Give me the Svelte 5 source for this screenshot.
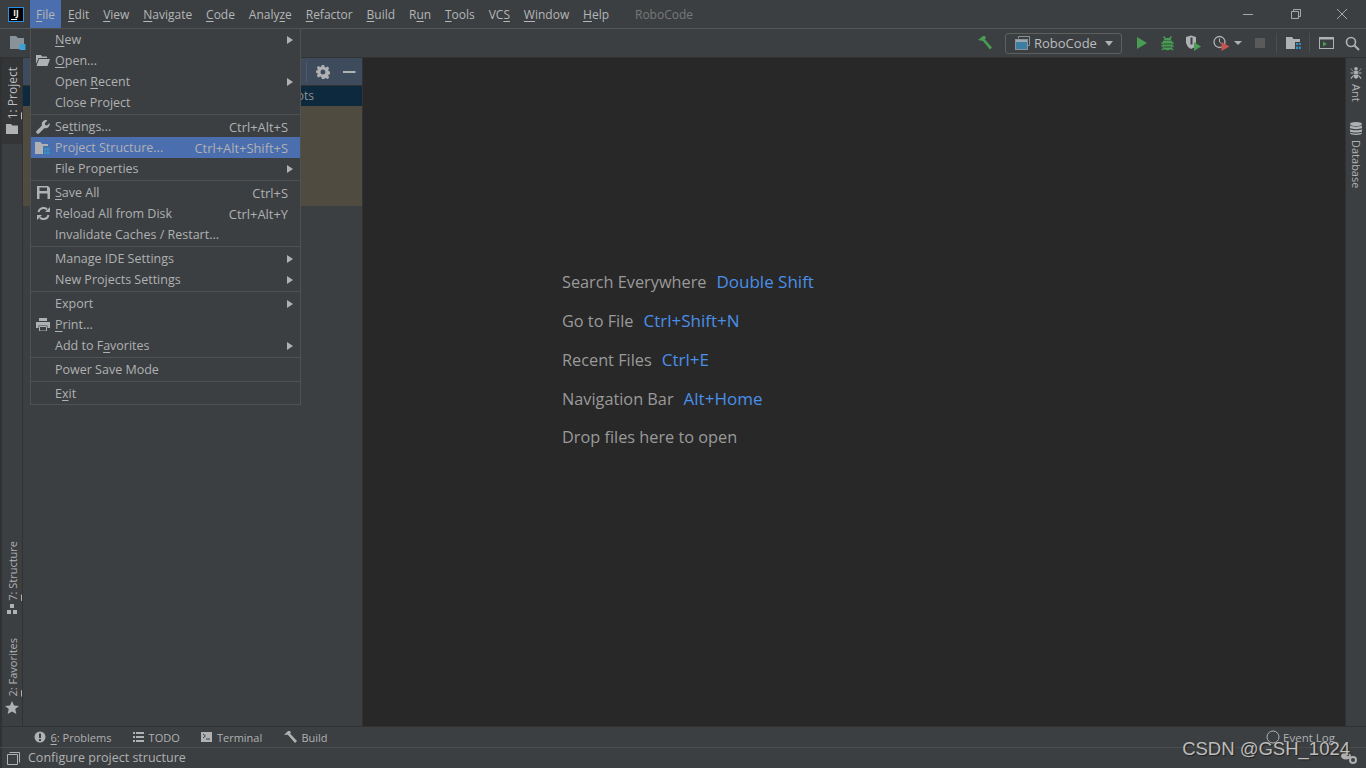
<script>
  const menuBar = [
    ["F", "ile"], ["E", "dit"], ["V", "iew"], ["N", "avigate"], ["C", "ode"],
    ["", "Analy", "z", "e"], ["R", "efactor"], ["B", "uild"], ["", "R", "u", "n"],
    ["T", "ools"], ["", "VC", "S", ""], ["W", "indow"], ["H", "elp"]
  ];

  // pre, underlined letter, post
  const groups = [
    [
      { t: ["", "N", "ew"], sub: true },
      { t: ["", "O", "pen..."], icon: "open" },
      { t: ["Open ", "R", "ecent"], sub: true },
      { t: ["Close Project", "", ""] }
    ],
    [
      { t: ["Se", "t", "tings..."], key: "Ctrl+Alt+S", icon: "wrench" },
      { t: ["Project Structure...", "", ""], key: "Ctrl+Alt+Shift+S", icon: "struct", active: true },
      { t: ["File Properties", "", ""], sub: true }
    ],
    [
      { t: ["", "S", "ave All"], key: "Ctrl+S", icon: "save" },
      { t: ["Reload All from Disk", "", ""], key: "Ctrl+Alt+Y", icon: "reload" },
      { t: ["Invalidate Caches / Restart...", "", ""] }
    ],
    [
      { t: ["Manage IDE Settings", "", ""], sub: true },
      { t: ["New Projects Settings", "", ""], sub: true }
    ],
    [
      { t: ["Export", "", ""], sub: true },
      { t: ["", "P", "rint..."], icon: "print" },
      { t: ["Add to F", "a", "vorites"], sub: true }
    ],
    [{ t: ["Power Save Mode", "", ""] }],
    [{ t: ["E", "x", "it"] }]
  ];

  const hints = [
    ["Search Everywhere", "Double Shift"],
    ["Go to File", "Ctrl+Shift+N"],
    ["Recent Files", "Ctrl+E"],
    ["Navigation Bar", "Alt+Home"],
    ["Drop files here to open", ""]
  ];
</script>

<div class="ide">
  <header class="titlebar">
    <div class="logo"><span>IJ</span><i></i></div>
    <nav class="menubar">
      {#each menuBar as m, i}
        <span class="mb-item" class:open={i === 0}>
          {#if m.length === 2}<u>{m[0]}</u>{m[1]}{:else}{m[1]}<u>{m[2]}</u>{m[3]}{/if}
        </span>
      {/each}
    </nav>
    <span class="project-name">RoboCode</span>
    <div class="winctl">
      <svg width="46" height="28" viewBox="0 0 46 28"><path d="M18 14.5h10" stroke="#a8a8a8" fill="none"/></svg>
      <svg width="46" height="28" viewBox="0 0 46 28"><path d="M19.500 11.500h7v7h-7zM21.500 11V9.500h7v7h-2" stroke="#a8a8a8" fill="none"/></svg>
      <svg width="46" height="28" viewBox="0 0 46 28"><path d="M18 9l10 10M28 9l-10 10" stroke="#a8a8a8" fill="none"/></svg>
    </div>
  </header>

  <div class="toolbar">
    <svg class="tb-folder" width="16" height="16" viewBox="0 0 16 16">
      <path d="M0 1h6l2 2h6v11H0z" fill="#8a9299"/><rect x="9.500" y="9" width="6" height="6" fill="#3aa0d5"/>
    </svg>
    <div class="tb-right">
      <svg width="16" height="16" viewBox="0 0 16 16"><path d="M1 5l5-4h2l1 2-3 3zM5.500 5.500L7.500 4 15 12.500 13 14.500z" fill="#499c54"/></svg>
      <div class="combo">
        <svg width="15" height="14" viewBox="0 0 15 14"><path d="M3.500 2.500V.5h11v9H13" stroke="#8a9299" fill="none"/><rect x=".5" y="3.500" width="12" height="10" fill="#3b7ea1" stroke="#8a9299"/><rect x="1" y="4" width="11" height="2" fill="#9aa7b0"/></svg>
        <span>RoboCode</span>
        <i class="tri"></i>
      </div>
      <div class="tb-icons">
        <svg width="12" height="14" viewBox="0 0 12 14"><path d="M1 1l10 6-10 6z" fill="#499c54"/></svg>
        <svg class="gap-13" width="13" height="15" viewBox="0 0 13 15">
          <path d="M3 0l1.800 2h3.400L10 0l1 1-1.500 2 1.500 1.500H2L3.500 3 2 1z" fill="#499c54"/>
          <path d="M2 5h9l.5 1.500H13v1h-1.500v2H13v1h-1.500L11 12l1.500 1.500-1 1L10 13c-1 1.500-6 1.500-7 0l-1.500 1.500-1-1L2 12l-.5-1.500H0v-1h1.500v-2H0v-1h1.500z" fill="#499c54"/>
          <path d="M2.500 7.500h8v1h-8zM2.500 10.500h8v1h-8z" fill="#2f4a33"/>
        </svg>
        <svg class="gap-12" width="16" height="16" viewBox="0 0 16 16"><path d="M0 2l5-1.500L10 2v6l-2 4.500L5 14l-3-2L0 8z" fill="#afb1b3"/><path d="M4.500 2.500h2v7h-2z" fill="#3c3f41"/><path d="M8 7l7 4.500L8 16z" fill="#499c54"/></svg>
        <svg class="gap-11" width="17" height="16" viewBox="0 0 17 16"><circle cx="6.500" cy="7" r="5.500" fill="none" stroke="#afb1b3" stroke-width="1.300"/><path d="M6.500 3.500V7l2 1.500" fill="none" stroke="#afb1b3"/><path d="M8.500 7l8 4.500-8 4.500z" fill="#c75450"/></svg>
        <i class="tri small"></i>
        <span class="stop"></span>
        <b class="tb-sep"></b>
        <svg width="15" height="14" viewBox="0 0 15 14"><path d="M0 1h6l1.500 2H14v3H9v7H0z" fill="#afb1b3"/><path d="M10 7h2v2h-2zM12.800 7h2v2h-2zM10 10.500h2v2.500h-2zM12.800 10.500h2v2.500h-2z" fill="#3592c4"/></svg>
        <b class="tb-sep two"></b>
        <svg width="15" height="14" viewBox="0 0 15 14"><rect x=".5" y="1.500" width="14" height="11" fill="none" stroke="#afb1b3"/><path d="M.5 2h14v1.500H.5z" fill="#afb1b3"/><path d="M4 5.500l4 2.500-4 2.500z" fill="#499c54"/></svg>
        <svg class="gap-11" width="15" height="15" viewBox="0 0 15 15"><circle cx="6" cy="6" r="4.500" fill="none" stroke="#afb1b3" stroke-width="1.700"/><path d="M9.500 9.500l4.500 4.500" stroke="#afb1b3" stroke-width="2"/></svg>
      </div>
    </div>
  </div>

  <div class="body">
    <aside class="strip left">
      <div class="vtab active">
        <span class="vtext"><u>1</u>: Project</span>
        <svg width="12" height="10" viewBox="0 0 12 10"><path d="M0 0h5l1.500 1.500H12V10H0z" fill="#afb1b3"/></svg>
      </div>
      <div class="strip-bottom">
        <div class="vtab">
          <span class="vtext"><u>7</u>: Structure</span>
          <svg width="10" height="10" viewBox="0 0 10 10"><path d="M3 0h4v4H3zM0 6h4v4H0zM6 6h4v4H6z" fill="#afb1b3"/></svg>
        </div>
        <div class="vtab">
          <span class="vtext"><u>2</u>: Favorites</span>
          <svg width="14" height="13" viewBox="0 0 14 13"><path d="M7 0l2 4.500 5 .4-3.800 3.200L11.400 13 7 10.400 2.600 13l1.200-4.900L0 4.900l5-.4z" fill="#afb1b3"/></svg>
        </div>
      </div>
    </aside>

    <section class="panel">
      <div class="panel-head">
        <b></b>
        <svg width="14" height="14" viewBox="0 0 14 14"><path d="M5.800 0h2.400l.4 1.900 1.300.6 1.700-1 1.600 1.700-1 1.600.6 1.400 1.900.4v2.400l-1.900.4-.6 1.300 1 1.700-1.600 1.600-1.700-1-1.300.6L8.200 14H5.800l-.4-1.900-1.300-.6-1.700 1L.8 10.900l1-1.700-.6-1.300L-.6 7.500V6l1.800-.4.600-1.400-1-1.600L2.400 1l1.700 1 1.300-.6zM7 4.500a2.500 2.500 0 1 0 0 5 2.500 2.500 0 0 0 0-5z" fill="#afb1b3" fill-rule="evenodd"/></svg>
        <svg width="13" height="14" viewBox="0 0 13 14"><path d="M0 6h12.500v2H0z" fill="#afb1b3"/></svg>
      </div>
      <div class="tree-sel">robots</div>
      <div class="tree-yellow"></div>
    </section>

    <main class="editor">
      <div class="hints">
        {#each hints as h}
          <p><span>{h[0]}</span>{#if h[1]}<em>{h[1]}</em>{/if}</p>
        {/each}
      </div>
    </main>

    <aside class="strip right">
      <div class="vtab-r">
        <svg width="12" height="12" viewBox="0 0 12 13"><path d="M6 0a2 2 0 0 1 2 2 2 2 0 0 1-1 1.500h-2A2 2 0 0 1 4 2a2 2 0 0 1 2-2zM4 4h4v3.500H4zM4 8h4l.5 3L6 13l-2.500-2zM0 1l3.500 3.500v1L0 2zM12 1L8.500 4.500v1L12 2zM0 6h3.500v1H0zM12 6H8.500v1H12zM0 12l3.500-4v1.500L1 13zM12 12L8.500 8v1.500L11 13z" fill="#afb1b3"/></svg>
        <span class="vtext-r">Ant</span>
      </div>
      <div class="vtab-r">
        <svg width="12" height="13" viewBox="0 0 12 13"><ellipse cx="6" cy="2" rx="6" ry="2" fill="#afb1b3"/><path d="M0 3.500c2 1.500 10 1.500 12 0V6c-2 1.500-10 1.500-12 0zM0 7.200c2 1.500 10 1.500 12 0v2.200c-2 1.500-10 1.500-12 0zM0 10.500c2 1.500 10 1.500 12 0V11c0 2.600-12 2.600-12 0z" fill="#afb1b3"/></svg>
        <span class="vtext-r">Database</span>
      </div>
    </aside>
  </div>

  <div class="toolbtns">
    <div class="tw">
      <svg width="12" height="12" viewBox="0 0 12 12"><circle cx="6" cy="6" r="5.500" fill="#afb1b3"/><path d="M5 2.500h2v4.500H5zM5 8h2v2H5z" fill="#3c3f41"/></svg>
      <span><u>6</u>: Problems</span>
    </div>
    <div class="tw">
      <svg width="11" height="10" viewBox="0 0 11 10"><path d="M0 0h2v2H0zM3 0h8v2H3zM0 4h2v2H0zM3 4h8v2H3zM0 8h2v2H0zM3 8h8v2H3z" fill="#afb1b3"/></svg>
      <span>TODO</span>
    </div>
    <div class="tw">
      <svg width="11" height="10" viewBox="0 0 11 10"><path d="M0 0h11v10H0z" fill="#afb1b3"/><path d="M2 2l2.500 2L2 6M5 7h4" stroke="#3c3f41" fill="none"/></svg>
      <span>Terminal</span>
    </div>
    <div class="tw">
      <svg width="13" height="12" viewBox="0 0 13 12"><path d="M0 4l4-4h2l1 1.500-2 2zM4 4l2-1.500 7 7.500-2 2z" fill="#afb1b3"/></svg>
      <span>Build</span>
    </div>
    <div class="tw event">
      <svg width="14" height="14" viewBox="0 0 14 14"><circle cx="7" cy="7" r="6" fill="none" stroke="#afb1b3"/></svg>
      <span>Event Log</span>
    </div>
  </div>

  <footer class="status">
    <svg width="13" height="13" viewBox="0 0 13 13"><path d="M2.500.5h10v10M.5 2.500h10v10H.5z" fill="none" stroke="#afb1b3"/></svg>
    <span>Configure project structure</span>
    <svg class="sync" width="16" height="12" viewBox="0 0 16 12"><ellipse cx="5" cy="4" rx="5" ry="3.500" fill="#afb1b3"/><circle cx="12" cy="8" r="3" fill="none" stroke="#afb1b3" stroke-width="2"/></svg>
  </footer>

  <!-- File menu popup, lies over the project panel -->
  <div class="menu">
    {#each groups as group, gi}
      {#if gi > 0}<div class="sep"></div>{/if}
      {#each group as it}
        <div class="row" class:active={it.active}>
          <span class="ico">
            {#if it.icon === "open"}
              <svg width="14" height="11" viewBox="0 0 14 11"><path d="M0 0h5l1 1.500h5V3H2.500L0 9z" fill="#afb1b3"/><path d="M3 4h11l-2.500 7H.5z" fill="#afb1b3"/></svg>
            {:else if it.icon === "wrench"}
              <svg width="14" height="14" viewBox="0 0 14 14"><path d="M13.500 3l-2.500 2.500L9 5V3l2.500-2.500A4 4 0 0 0 6 5.500L.5 11a1.800 1.800 0 0 0 2.500 2.500L8.500 8A4 4 0 0 0 13.500 3z" fill="#afb1b3"/></svg>
            {:else if it.icon === "struct"}
              <svg width="15" height="12" viewBox="0 0 15 12"><path d="M0 0h5.500l1.500 2h6v2H8v8H0z" fill="#afb1b3"/><path d="M9 6h2.500v2.500H9zM12 6h2.500v2.500H12zM9 9.500h2.500V12H9zM12 9.500h2.500V12H12z" fill="#3592c4"/></svg>
            {:else if it.icon === "save"}
              <svg width="13" height="13" viewBox="0 0 13 13"><path d="M0 0h11l2 2v11H0zM2.500 1.500v3.500h7.500V1.500zM2.500 7.500V13h8V7.500z" fill="#afb1b3" fill-rule="evenodd"/></svg>
            {:else if it.icon === "reload"}
              <svg width="13" height="13" viewBox="0 0 13 13"><path d="M1.500 5A5 5 0 0 1 10 2.500M11.500 8A5 5 0 0 1 3 10.500" fill="none" stroke="#afb1b3" stroke-width="2"/><path d="M8 5h5V0zM5 8H0v5z" fill="#afb1b3"/></svg>
            {:else if it.icon === "print"}
              <svg width="14" height="13" viewBox="0 0 14 13"><path d="M3 0h8v3H3zM0 4h14v6h-2.500V7.500h-9V10H0z" fill="#afb1b3"/><path d="M3.500 8.500h7V13h-7z" fill="none" stroke="#afb1b3"/></svg>
            {/if}
          </span>
          <span class="label">{it.t[0]}{#if it.t[1]}<u>{it.t[1]}</u>{/if}{it.t[2]}</span>
          {#if it.key}<span class="key">{it.key}</span>{/if}
          {#if it.sub}<i class="arrow"></i>{/if}
        </div>
      {/each}
    {/each}
  </div>

  <div class="watermark">CSDN @GSH_1024</div>
</div>

<style>
  :global(body) {
    margin: 0;
    background: #3c3f41;
  }

  .ide {
    position: relative;
    width: 1366px;
    height: 768px;
    overflow: hidden;
    display: flex;
    flex-direction: column;
    background: #3c3f41;
    color: #afb1b3;
    font-family: "Open Sans", "Noto Sans", sans-serif;
    font-size: 12px;
  }

  u {
    text-underline-offset: 2px;
  }

  .titlebar {
    height: 28px;
    flex: none;
    display: flex;
    align-items: center;
    border-bottom: 1px solid #555759;
    font-size: 12px;
  }

  .logo {
    width: 14px;
    height: 13px;
    margin-left: 8px;
    background: #000;
    border: 1px solid #2d8fe0;
    color: #fff;
    font-size: 8px;
    font-weight: 700;
    line-height: 9px;
    text-align: center;
    position: relative;
  }

  .logo span {
    display: block;
  }

  .logo i {
    position: absolute;
    left: 2px;
    bottom: 1px;
    width: 6px;
    height: 1px;
    background: #fff;
  }

  .menubar {
    display: flex;
    margin-left: 6px;
    height: 28px;
  }

  .mb-item {
    padding: 0 6.950px;
    line-height: 29px;
    color: #b4b6b8;
  }

  .mb-item.open {
    padding: 0 6px;
    background: #4b6eaf;
  }

  .project-name {
    margin-left: 19px;
    color: #787878;
  }

  .winctl {
    margin-left: auto;
    display: flex;
    padding-right: 1px;
  }

  .winctl svg {
    display: block;
    margin-left: 1px;
  }

  .toolbar {
    height: 28px;
    flex: none;
    display: flex;
    align-items: center;
    justify-content: space-between;
    border-bottom: 1px solid #323232;
    background: #3c3f41;
  }

  .tb-folder {
    margin-left: 10px;
  }

  .tb-right {
    display: flex;
    align-items: center;
    padding-right: 6px;
  }

  .combo {
    display: flex;
    align-items: center;
    width: 117px;
    height: 21px;
    box-sizing: border-box;
    margin-left: 12px;
    padding-left: 9px;
    border: 1px solid #5e6060;
    border-radius: 3px;
    color: #bbbdbf;
    font-size: 13px;
  }

  .combo span {
    margin-left: 4px;
  }

  .tri {
    width: 0;
    height: 0;
    margin-left: 8px;
    border-left: 4.500px solid transparent;
    border-right: 4.500px solid transparent;
    border-top: 5px solid #afb1b3;
  }

  .tri.small {
    margin-left: 4px;
    border-left-width: 4px;
    border-right-width: 4px;
    border-top-width: 4px;
  }

  .tb-icons {
    display: flex;
    align-items: center;
    margin-left: 14px;
  }

  .gap-13 {
    margin-left: 13px;
  }

  .gap-12 {
    margin-left: 12px;
  }

  .gap-11 {
    margin-left: 11px;
  }

  .stop {
    width: 10px;
    height: 10px;
    margin-left: 13px;
    background: #5a5a5a;
  }

  .tb-sep {
    width: 1px;
    height: 20px;
    margin: 0 9px 0 11px;
    background: #4b4d4f;
  }

  .tb-sep.two {
    margin: 0 9px 0 8px;
  }

  .body {
    flex: 1;
    min-height: 0;
    display: flex;
  }

  .strip {
    flex: none;
    display: flex;
    flex-direction: column;
    background: #3c3f41;
  }

  .strip.left {
    width: 21px;
    box-sizing: border-box;
    margin-left: 2px;
    border-right: 1px solid #323232;
    box-shadow: -2px 0 0 #2f3133;
  }

  .strip.right {
    width: 20px;
    border-left: 1px solid #323232;
    padding-top: 9px;
  }

  .vtab {
    display: flex;
    flex-direction: column;
    align-items: center;
    gap: 4px;
    font-size: 11px;
  }

  .vtab svg {
    flex: none;
  }

  .vtab.active {
    height: 86px;
    box-sizing: border-box;
    padding-top: 9px;
    gap: 5px;
    background: #333537;
    font-size: 12px;
    color: #bbbdbf;
  }

  .vtext {
    writing-mode: vertical-rl;
    transform: rotate(180deg);
    white-space: nowrap;
    line-height: 14px;
    margin-left: 1px;
  }

  .strip-bottom {
    margin-top: auto;
    display: flex;
    flex-direction: column;
    gap: 24px;
    padding-bottom: 12px;
  }

  .vtab-r {
    display: flex;
    flex-direction: column;
    align-items: center;
    gap: 4.500px;
    margin-bottom: 21px;
    font-size: 11px;
    padding-right: 1px;
  }

  .vtext-r {
    writing-mode: vertical-rl;
    white-space: nowrap;
    line-height: 14px;
  }

  .panel {
    width: 340px;
    flex: none;
    display: flex;
    flex-direction: column;
    border-right: 1px solid #323232;
    box-sizing: border-box;
  }

  .panel-head {
    height: 27px;
    flex: none;
    display: flex;
    align-items: center;
    justify-content: flex-end;
    gap: 13px;
    padding-right: 6px;
    background: #3d4b5c;
    border-bottom: 1px solid #323232;
  }

  .panel-head b {
    width: 1px;
    height: 20px;
    background: #50596a;
    margin-right: -4px;
  }

  .tree-sel {
    height: 20px;
    flex: none;
    line-height: 20px;
    text-align: right;
    padding-right: 48px;
    background: #0d293e;
    color: #8f9193;
  }

  .tree-yellow {
    height: 100px;
    flex: none;
    background: #4f4b41;
  }

  .editor {
    flex: 1;
    display: flex;
    flex-direction: column;
    padding-top: 212px;
    padding-left: 199px;
    background: #282828;
    font-size: 16.300px;
  }

  .hints p {
    margin: 0 0 16px;
    height: 23px;
    line-height: 23px;
    color: #9a9a9a;
    white-space: nowrap;
  }

  .hints em {
    margin-left: 10px;
    font-style: normal;
    font-size: 17px;
    color: #4a8fe8;
  }

  .toolbtns {
    height: 22px;
    flex: none;
    box-sizing: border-box;
    display: flex;
    align-items: center;
    padding-left: 34px;
    gap: 21.700px;
    border-top: 1px solid #323232;
    border-bottom: 1px solid #4a4c4e;
    box-shadow: inset 2px 0 0 #2f3133;
    font-size: 11px;
  }

  .tw {
    display: flex;
    align-items: center;
    gap: 4.500px;
  }

  .tw.event {
    margin-left: auto;
    margin-right: 31px;
    gap: 3px;
    font-size: 11.500px;
  }

  .status {
    height: 20px;
    flex: none;
    display: flex;
    align-items: center;
    padding-left: 7px;
    gap: 8px;
    font-size: 12.500px;
    box-shadow: inset 2px 0 0 #2f3133;
  }

  .status span {
    margin-top: -1px;
  }

  .sync {
    margin-left: auto;
    margin-right: 9px;
  }

  .menu {
    position: absolute;
    left: 30px;
    top: 28px;
    width: 271px;
    box-sizing: border-box;
    background: #3c3f41;
    border: 1px solid #515151;
    font-size: 12.500px;
  }

  .row {
    height: 21px;
    display: flex;
    align-items: center;
    color: #afb1b3;
    padding-right: 12px;
  }

  .row.active {
    background: #4b6eaf;
  }

  .ico {
    width: 24px;
    flex: none;
    display: flex;
    justify-content: flex-end;
  }

  .ico svg {
    display: block;
    margin-right: 5px;
  }

  .label {
    flex: 1;
    white-space: nowrap;
  }

  .key {
    white-space: nowrap;
    font-size: 12.900px;
  }

  .arrow {
    width: 0;
    height: 0;
    margin-right: -5px;
    border-top: 4px solid transparent;
    border-bottom: 4px solid transparent;
    border-left: 6px solid #afb1b3;
  }

  .sep {
    height: 1px;
    margin: 1px 0;
    background: #515151;
  }

  .watermark {
    position: absolute;
    right: 16px;
    top: 737px;
    font-family: "Liberation Sans", sans-serif;
    font-size: 18.500px;
    line-height: 24px;
    color: #bdbdbd;
    text-shadow: 1px 1px 1px #222;
    pointer-events: none;
  }
</style>
